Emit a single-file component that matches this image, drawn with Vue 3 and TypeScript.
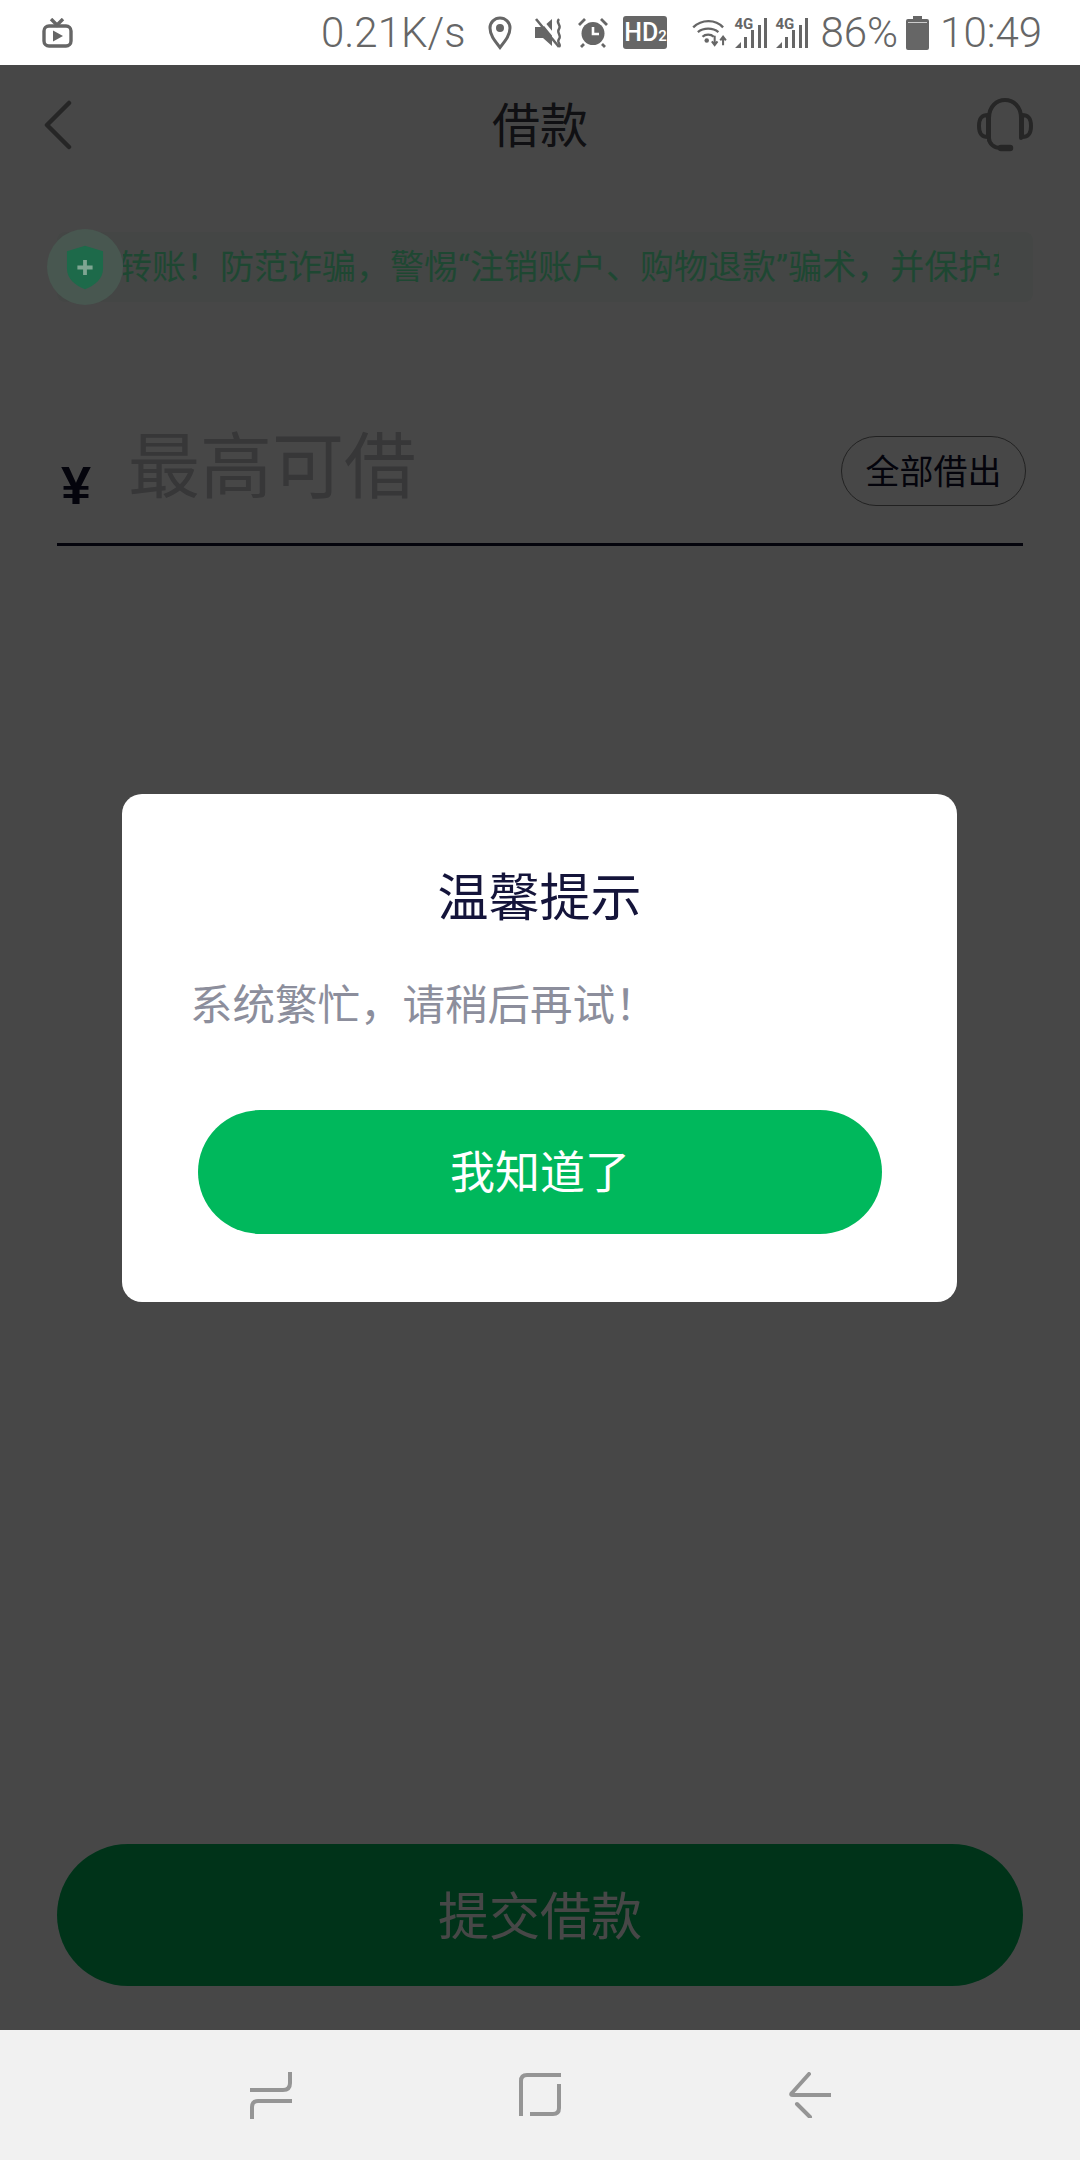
<template>
  <div class="screen">
    <!-- status bar -->
    <div class="status">
      <svg class="tv" width="31" height="30" viewBox="0 0 31 30">
        <path d="M9 1l6 6 6-6" fill="none" stroke="#666" stroke-width="3.4" />
        <rect x="2" y="8" width="27" height="20" rx="5" fill="none" stroke="#666" stroke-width="3.4" />
        <path d="M11 12.5v11l10-5.5z" fill="#666" />
      </svg>
      <span class="speed">0.21K/s</span>
      <svg class="pin" width="24" height="34" viewBox="0 0 24 34">
        <path d="M12 31.500C6 24 2 19 2 12a10 10 0 0 1 20 0c0 7-4 12-10 19.500z" fill="none" stroke="#666" stroke-width="3" />
        <circle cx="12" cy="12" r="4" fill="#666" />
      </svg>
      <svg class="mute" width="28" height="30" viewBox="0 0 28 30">
        <path d="M0 9h8l9-8v27l-9-8H0z" fill="#666" />
        <path d="M1 1l23 28" stroke="#666" stroke-width="2.600" />
        <path d="M4.500 0l23 28" stroke="#fff" stroke-width="3" />
        <path d="M24 1c-4 4 3 6 0 10s3 6 0 10 3 5 0 8" fill="none" stroke="#666" stroke-width="2.400" />
      </svg>
      <svg class="alarm" width="30" height="31" viewBox="0 0 30 31">
        <circle cx="15" cy="16.500" r="11.500" fill="#666" />
        <path d="M15 10v7h6" fill="none" stroke="#fff" stroke-width="2.600" />
        <path d="M1 8l6-6M29 8l-6-6M6 27l-3 3M24 27l3 3" stroke="#666" stroke-width="2.800" />
      </svg>
      <span class="hd">HD<small>2</small></span>
      <svg class="wifi" width="36" height="28" viewBox="0 0 38 30">
        <path d="M1 9c9-9 24-9 32 0M6 14c6-5 16-5 22 0M11 19c3-3 9-3 12 0" fill="none" stroke="#666" stroke-width="2.500" />
        <circle cx="15.500" cy="23" r="2.400" fill="#666" />
        <path d="M24 18v9M21 24l3 4 3-4M33 28v-8M30 23l3-4 3 4" fill="none" stroke="#666" stroke-width="2.200" />
      </svg>
      <span class="sig">
        <b>4G</b>
        <svg width="32" height="32" viewBox="0 0 32 32">
          <path d="M0 31l6-6v6zM9 20h3v11H9zM16 13h3v18h-3zM23 8h3v23h-3zM29 1h3v30h-3z" fill="#666" />
        </svg>
      </span>
      <span class="sig second">
        <b>4G</b>
        <svg width="32" height="32" viewBox="0 0 32 32">
          <path d="M0 31l6-6v6zM9 20h3v11H9zM16 13h3v18h-3zM23 8h3v23h-3zM29 1h3v30h-3z" fill="#666" />
        </svg>
      </span>
      <span class="pct">86%</span>
      <svg class="batt" width="23" height="34" viewBox="0 0 23 34">
        <path d="M7 0h9v3h5a2 2 0 0 1 2 2v27a2 2 0 0 1-2 2H2a2 2 0 0 1-2-2V5a2 2 0 0 1 2-2h5z" fill="#666" />
        <path d="M2 6.500h19" stroke="#ccc" stroke-width="1" />
      </svg>
      <span class="time">10:49</span>
    </div>

    <div class="body">
      <!-- page underneath the dialog -->
      <div class="page">
        <header class="nav">
          <svg class="back" width="30" height="50" viewBox="0 0 30 50">
            <path d="M26 3L4 25l22 22" fill="none" stroke="#888" stroke-width="4.500" stroke-linecap="round" stroke-linejoin="round" />
          </svg>
          <h1>借款</h1>
          <svg class="service" width="56" height="54" viewBox="0 0 56 54">
            <path d="M12 42V20C12 -4 44 -4 44 20v20" fill="none" stroke="#888" stroke-width="4" stroke-linecap="round" />
            <path d="M11 17C4 17 2 21 2 28s2 11 9 11zM45 17c7 0 9 4 9 11s-2 11-9 11z" fill="none" stroke="#888" stroke-width="4" stroke-linejoin="round" />
            <path d="M12 40c0 6 5 10 12 10" fill="none" stroke="#888" stroke-width="4" />
            <path d="M24 50h9" stroke="#888" stroke-width="6.500" stroke-linecap="round" />
          </svg>
        </header>

        <div class="notice">
          <span class="badge">
            <svg width="38" height="45" viewBox="0 0 40 46">
              <path d="M20 0l19 6v18c0 11-9 18-19 22C10 42 1 35 1 24V6z" fill="#1d6a4a" />
              <path d="M20 15v16M12 23h16" stroke="#7fa592" stroke-width="4" />
            </svg>
          </span>
          <div class="marquee">
            <span>转账！防范诈骗，警惕“注销账户、购物退款”骗术，并保护转账安全</span>
          </div>
        </div>

        <div class="amount">
          <span class="yen">¥</span>
          <span class="hint">最高可借</span>
          <span class="all">全部借出</span>
        </div>

        <button class="submit">提交借款</button>
      </div>

      <!-- dialog -->
      <div class="mask">
        <div class="dialog">
          <h2>温馨提示</h2>
          <p>系统繁忙，请稍后再试！</p>
          <button class="ok">我知道了</button>
        </div>
      </div>
    </div>

    <!-- android buttons -->
    <div class="softkeys">
      <svg width="42" height="47" viewBox="0 0 42 47">
        <path d="M40 0v11q0 7-7 7H0M42 29H8q-6 0-6 6v12" fill="none" stroke="#959595" stroke-width="4" />
      </svg>
      <svg width="42" height="46" viewBox="0 0 42 46">
        <path d="M42 3H8q-6 0-6 6v35M40 12v24q0 6-6 6H11" fill="none" stroke="#959595" stroke-width="4" />
      </svg>
      <svg class="key-back" width="42" height="46" viewBox="0 0 42 46">
        <path d="M20 2L3 21q-2 2 1 2h38M8 32l13 13" fill="none" stroke="#959595" stroke-width="4" stroke-linecap="round" />
      </svg>
    </div>
  </div>
</template>

<script setup lang="ts">
</script>

<style>
html,
body {
  margin: 0;
  background: #fff;
}
</style>

<style scoped>
.screen {
  width: 1080px;
  height: 2160px;
  display: flex;
  flex-direction: column;
  font-family: "Noto Sans CJK SC", "Noto Sans", sans-serif;
  overflow: hidden;
}

.status {
  height: 65px;
  flex: none;
  display: flex;
  align-items: center;
  padding-left: 42px;
  background: #fff;
  color: #666;
  font-family: Roboto, sans-serif;
  font-weight: 300;
  font-size: 42px;
  box-sizing: border-box;
}

.speed {
  margin-left: 248px;
}

.pin {
  margin-left: 23px;
}

.mute {
  margin-left: 23px;
}

.alarm {
  margin-left: 15px;
}

.hd {
  margin-left: 15px;
  width: 44px;
  height: 33px;
  border-radius: 3px;
  background: #666;
  color: #fff;
  font-size: 25px;
  font-weight: 500;
  line-height: 33px;
  text-align: center;
}

.hd small {
  font-size: 15px;
}

.wifi {
  margin-left: 25px;
}

.sig {
  position: relative;
  margin-left: 7px;
  width: 32px;
  height: 32px;
}

.sig.second {
  margin-left: 9px;
}

.sig b {
  position: absolute;
  left: -1px;
  top: 0;
  font-size: 15px;
  line-height: 14px;
  font-weight: 700;
}

.sig svg {
  display: block;
}

.pct {
  margin-left: 12px;
}

.batt {
  margin-left: 8px;
}

.time {
  margin-left: 11px;
}

.body {
  position: relative;
  flex: 1;
  min-height: 0;
}

.page {
  height: 100%;
  display: flex;
  flex-direction: column;
  padding: 0 57px;
  box-sizing: border-box;
  background: #fff;
}

.nav {
  height: 120px;
  flex: none;
  display: grid;
  grid-template-columns: 1fr auto 1fr;
  align-items: center;
}

.nav h1 {
  margin: 0 0 6px;
  font-size: 48px;
  font-weight: 400;
  color: #3a3a44;
}

.back {
  margin-left: -14px;
}

.service {
  justify-self: end;
  margin-right: -10px;
}

.notice {
  margin-top: 47px;
  margin-right: -10px;
  height: 70px;
  display: flex;
  align-items: center;
  background: #f3fbf6;
  border-radius: 8px;
}

/* sits above the mask: it stays lighter than the dimmed page */
.badge {
  position: relative;
  z-index: 2;
  flex: none;
  width: 76px;
  height: 76px;
  margin-left: -10px;
  border-radius: 50%;
  background: #485750;
  display: flex;
  align-items: center;
  justify-content: center;
}

.marquee {
  width: 876px;
  margin-bottom: 6px;
  overflow: hidden;
  white-space: nowrap;
  font-family: Roboto, "Noto Sans CJK SC", sans-serif;
  font-size: 34px;
  color: rgb(110, 255, 180);
}

.marquee span {
  margin-left: -5px;
}

.amount {
  margin-top: 124px;
  height: 80px;
  display: flex;
  align-items: flex-end;
  border-bottom: 3px solid #10102c;
  padding-bottom: 37px;
}

.yen {
  width: 71px;
  margin-bottom: -7px;
  padding-left: 4px;
  font-family: "Liberation Sans", sans-serif;
  font-size: 54px;
  font-weight: 700;
  line-height: 56px;
  color: #10102c;
  box-sizing: border-box;
}

.hint {
  font-size: 72px;
  line-height: 90px;
  color: #c4c4c8;
}

.all {
  margin-left: auto;
  margin-right: -3px;
  width: 185px;
  height: 70px;
  border: 1px solid #777;
  border-radius: 35px;
  box-sizing: border-box;
  text-align: center;
  font-size: 34px;
  line-height: 66px;
  color: #10102c;
}

.submit {
  margin-top: auto;
  margin-bottom: 44px;
  padding-bottom: 5px;
  width: 966px;
  height: 142px;
  flex: none;
  border: 0;
  border-radius: 71px;
  background: #00b85c;
  color: #fff;
  font-family: inherit;
  font-size: 51px;
}

.mask {
  position: absolute;
  inset: 0;
  background: rgba(0, 0, 0, 0.72);
  display: flex;
  align-items: center;
  justify-content: center;
}

.dialog {
  width: 835px;
  height: 508px;
  margin-right: 1px;
  padding: 60px 68px 0;
  background: #fff;
  border-radius: 20px;
  box-sizing: border-box;
}

.dialog h2 {
  margin: 0;
  text-align: center;
  font-size: 51px;
  font-weight: 400;
  line-height: 80px;
  color: #14143a;
}

.dialog p {
  margin: 38px 0 0;
  font-size: 42.500px;
  line-height: 60px;
  color: #8c8e9c;
  white-space: nowrap;
}

.ok {
  display: block;
  margin: 78px 0 0 8px;
  padding-bottom: 5px;
  width: 684px;
  height: 124px;
  border: 0;
  border-radius: 62px;
  background: #00b85c;
  color: #fff;
  font-family: inherit;
  font-size: 45px;
}

.softkeys {
  height: 130px;
  flex: none;
  background: #f1f1f1;
  display: flex;
  align-items: center;
  justify-content: center;
  gap: 227px;
}

.key-back {
  margin-left: 1px;
}
</style>
